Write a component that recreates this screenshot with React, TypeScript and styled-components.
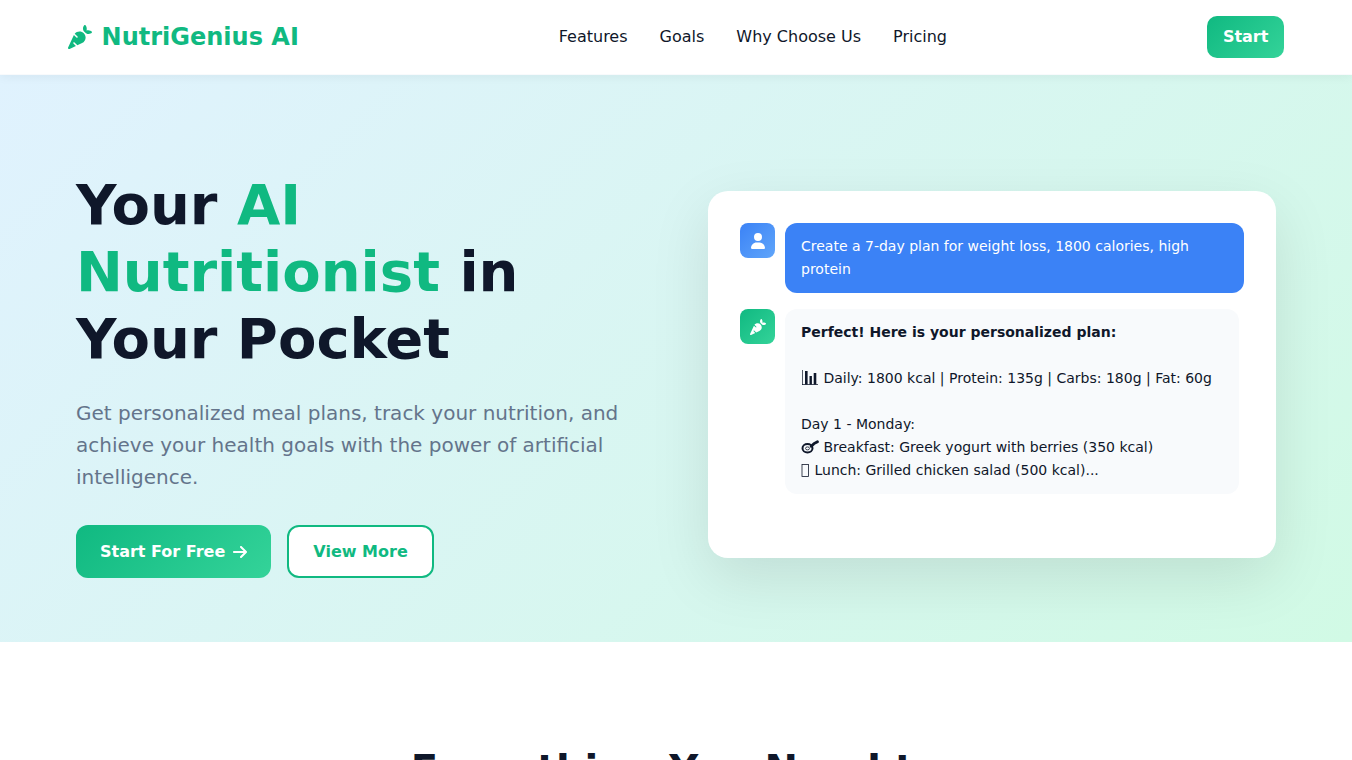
import React from 'react';
import styled, { createGlobalStyle } from 'styled-components';
import { FaCarrot, FaUser, FaArrowRight } from 'react-icons/fa6';

const green = '#10b981';
const greenGradient = 'linear-gradient(135deg, #10b981, #34d399)';
const blueGradient = 'linear-gradient(135deg, #3b82f6, #60a5fa)';
const dark = '#0f172a';

const GlobalStyle = createGlobalStyle`
  *, *::before, *::after { box-sizing: border-box; }
  html { scrollbar-width: none; }
  body {
    margin: 0;
    background: #fff;
    color: ${dark};
    font-family: 'DejaVu Sans', sans-serif;
    font-size: 16px;
    line-height: 26px;
  }
  h1, h2, p, ul { margin: 0; padding: 0; }
`;

const Header = styled.header`
  position: sticky;
  top: 0;
  z-index: 10;
  display: flex;
  align-items: center;
  justify-content: space-between;
  padding: 16px 5%;
  border-bottom: 1px solid #f8fafc;
  background: #fff;
  box-shadow: 0 2px 10px rgba(0, 0, 0, 0.05);
`;

const Logo = styled.a`
  display: flex;
  align-items: center;
  gap: 10px;
  color: ${green};
  font-size: 24px;
  font-weight: 700;
  text-decoration: none;
`;

const NavList = styled.ul`
  display: flex;
  gap: 32px;
  list-style: none;
`;

const NavLink = styled.a`
  color: ${dark};
  text-decoration: none;
`;

const Button = styled.button<{ $variant?: 'solid' | 'outline'; $compact?: boolean }>`
  display: inline-flex;
  align-items: center;
  justify-content: center;
  gap: 8px;
  padding: ${(p) => (p.$compact ? '8px 16px' : p.$variant === 'outline' ? '12px 24px' : '14px 24px')};
  border: ${(p) => (p.$variant === 'outline' ? `2px solid ${green}` : 'none')};
  border-radius: ${(p) => (p.$compact ? '10px' : '12px')};
  background: ${(p) => (p.$variant === 'outline' ? '#fff' : greenGradient)};
  color: ${(p) => (p.$variant === 'outline' ? green : '#fff')};
  font-family: inherit;
  font-size: 16px;
  font-weight: 700;
  line-height: ${(p) => (p.$compact ? '26px' : '25px')};
  cursor: pointer;
`;

const ArrowIcon = styled(FaArrowRight)`
  width: 14px;
  height: 16px;
`;

const Hero = styled.section`
  padding: 96px 5% 64px;
  background: linear-gradient(135deg, #e0f2fe 0%, #d1fae5 100%);
`;

const HeroGrid = styled.div`
  display: grid;
  grid-template-columns: 1fr 1fr;
  align-items: center;
  gap: 64px;
  max-width: 1200px;
  margin: 0 auto;
`;

const Title = styled.h1`
  margin-bottom: 25px;
  font-size: 56px;
  font-weight: 700;
  line-height: 67px;
`;

const Accent = styled.span`
  color: ${green};
`;

const Lead = styled.p`
  margin-bottom: 32px;
  color: #64748b;
  font-size: 20px;
  line-height: 32px;
`;

const Actions = styled.div`
  display: flex;
  gap: 16px;
`;

const ChatCard = styled.div`
  display: flex;
  flex-direction: column;
  gap: 16px;
  padding: 32px 32px 64px;
  border-radius: 20px;
  background: #fff;
  box-shadow: 0 20px 60px rgba(0, 0, 0, 0.1);
`;

const Message = styled.div`
  display: flex;
  align-items: flex-start;
  gap: 10px;
`;

const Avatar = styled.div<{ $fill: string }>`
  display: flex;
  flex: none;
  align-items: center;
  justify-content: center;
  width: 35px;
  height: 35px;
  border-radius: 8px;
  background: ${(p) => p.$fill};
  color: #fff;
  font-size: 16px;
`;

const Bubble = styled.p<{ $own?: boolean }>`
  flex: 1;
  max-width: ${(p) => (p.$own ? 'none' : '454px')};
  padding: 12px 16px;
  border-radius: 12px;
  background: ${(p) => (p.$own ? '#3b82f6' : '#f8fafc')};
  color: ${(p) => (p.$own ? '#fff' : dark)};
  font-size: 14px;
  line-height: 23px;
`;

const Glyph = styled.svg`
  height: 16px;
  vertical-align: -3px;
`;

const ChartGlyph = () => (
  <Glyph width="18" viewBox="0 0 18 16" role="img" aria-label="Chart" fill="currentColor">
    <path d="M1 0h.7v14.3H17v.7H1z" />
    <path d="M4 1h2.6v13.5H4zM8.5 6h2.4v8.500H8.500zM12.700 3h2.600v11.500h-2.600z" />
  </Glyph>
);

const PanGlyph = () => (
  <Glyph width="18" viewBox="0 0 18 16" role="img" aria-label="Frying pan" fill="none" stroke="currentColor">
    <ellipse cx="6.5" cy="9.2" rx="5" ry="4.2" strokeWidth="2" />
    <ellipse cx="6.5" cy="9.4" rx="2" ry="1.5" strokeWidth="0.8" />
    <path d="M10.2 7.2L13 4.600L16.500 2.800" strokeWidth="2.800" strokeLinecap="round" />
  </Glyph>
);

const BoxGlyph = () => (
  <Glyph width="9" viewBox="0 0 9 16" role="img" aria-label="Salad" fill="none" stroke="currentColor">
    <rect x="1" y="2.5" width="6.5" height="12" strokeWidth="0.8" />
  </Glyph>
);

const Features = styled.section`
  padding: 96px 5%;
  text-align: center;
`;

const SectionTitle = styled.h2`
  max-width: 600px;
  margin: 0 auto;
  font-size: 40px;
  font-weight: 700;
  line-height: 64px;
`;

const links = ['Features', 'Goals', 'Why Choose Us', 'Pricing'];

export default function App() {
  return (
    <>
      <GlobalStyle />
      <Header>
        <Logo href="#">
          <FaCarrot aria-hidden />
          NutriGenius AI
        </Logo>
        <nav>
          <NavList>
            {links.map((label) => (
              <li key={label}>
                <NavLink href={`#${label.toLowerCase().replace(/ /g, '-')}`}>{label}</NavLink>
              </li>
            ))}
          </NavList>
        </nav>
        <Button type="button" $compact>Start</Button>
      </Header>
      <main>
        <Hero>
          <HeroGrid>
            <div>
              <Title>
                Your <Accent>AI Nutritionist</Accent> in Your Pocket
              </Title>
              <Lead>
                Get personalized meal plans, track your nutrition, and achieve your health goals with
                the power of artificial intelligence.
              </Lead>
              <Actions>
                <Button type="button">
                  Start For Free <ArrowIcon aria-hidden />
                </Button>
                <Button type="button" $variant="outline">View More</Button>
              </Actions>
            </div>
            <ChatCard>
              <Message>
                <Avatar $fill={blueGradient}><FaUser aria-hidden /></Avatar>
                <Bubble $own>Create a 7-day plan for weight loss, 1800 calories, high protein</Bubble>
              </Message>
              <Message>
                <Avatar $fill={greenGradient}><FaCarrot aria-hidden /></Avatar>
                <Bubble>
                  <strong>Perfect! Here is your personalized plan:</strong>
                  <br />
                  <br />
                  <ChartGlyph /> Daily: 1800 kcal | Protein: 135g | Carbs: 180g | Fat: 60g
                  <br />
                  <br />
                  Day 1 - Monday:
                  <br />
                  <PanGlyph /> Breakfast: Greek yogurt with berries (350 kcal)
                  <br />
                  <BoxGlyph /> Lunch: Grilled chicken salad (500 kcal)...
                </Bubble>
              </Message>
            </ChatCard>
          </HeroGrid>
        </Hero>
        <Features id="features">
          <SectionTitle>Everything You Need to</SectionTitle>
        </Features>
      </main>
    </>
  );
}
